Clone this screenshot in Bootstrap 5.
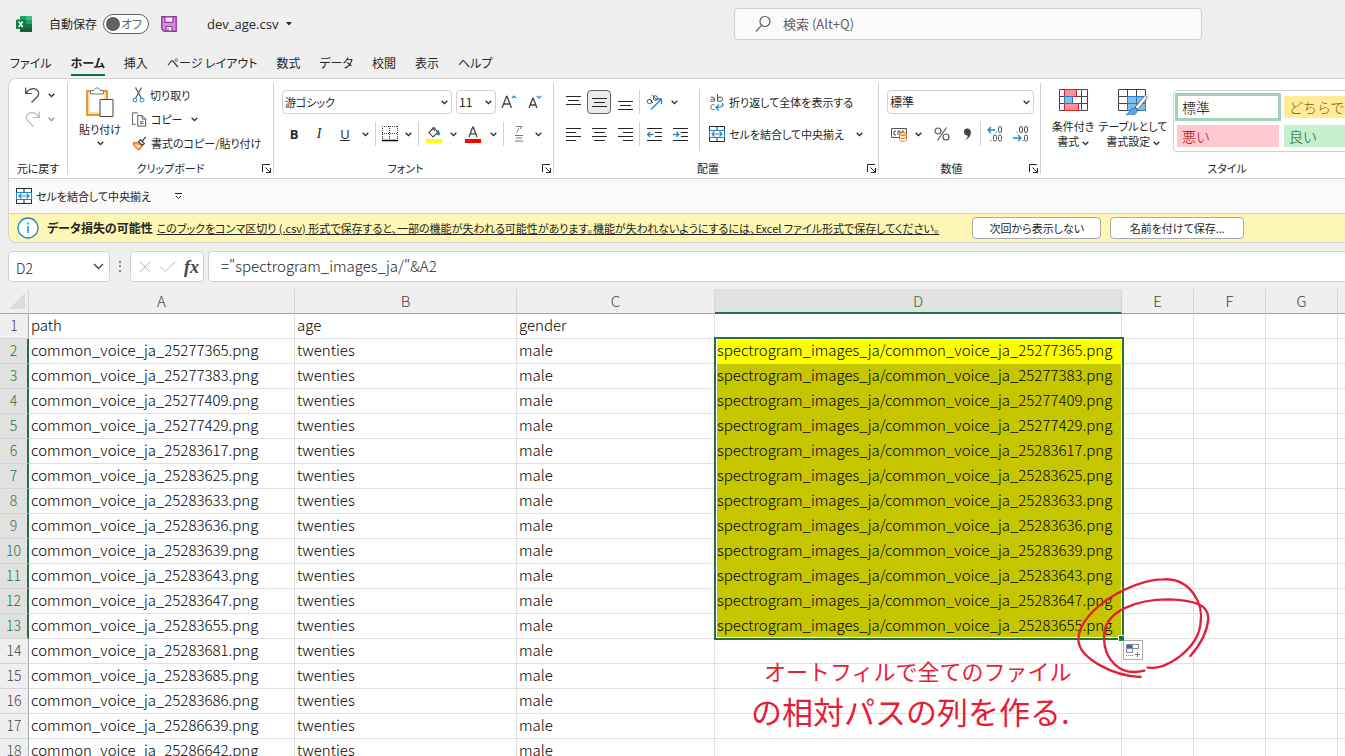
<!DOCTYPE html>
<html lang="ja">
<head>
<meta charset="utf-8">
<meta name="viewport" content="width=device-width, initial-scale=1">
<title>dev_age.csv - Excel</title>
<link rel="stylesheet" href="https://cdn.jsdelivr.net/npm/bootstrap@5.3.0/dist/css/bootstrap.min.css">
<style>
body{background:#efefef;color:#262626;font:11px/16px "Noto Sans CJK JP",sans-serif;font-feature-settings:"palt";overflow:hidden;height:100vh}
svg{display:block;fill:none;flex:none}
button{border:0;background:none;padding:0;color:inherit;font:inherit;font-feature-settings:inherit}
.ui{white-space:nowrap}
.titlebar{height:48px;padding:0 0 0 16px;font-size:12px}
.switch-box{width:46px;height:20px;border:1px solid #616161;border-radius:10px;background:#fff;padding:0 6px 0 2px;margin:0 12px 0 6px;color:#616161}
.switch-box input{appearance:none;width:14px;height:14px;border-radius:7px;background:#616161;margin:0}
.search{width:468px;height:32px;margin-right:143px;background:#fafafa;border:1px solid #d1d1d1;border-radius:4px;padding-left:20px}
.search input{border:0;background:none;outline:0;width:100%;font-size:13px}
.search input::placeholder{color:#616161;opacity:1}
.filename{font:13px/18px "Open Sans","Noto Sans",sans-serif;margin-left:30px}
.tabs{height:30px;padding:6px 0 0 10px;gap:19px;font-size:12px;line-height:18px}
.tabs a{color:#262626;text-decoration:none;height:22px;white-space:nowrap}
.tabs a.on{font-weight:700;border-bottom:2px solid #107040}
.ribbon{margin-left:8px;border:1px solid #d1d1d1;border-right:0;border-radius:8px 0 0 8px;overflow:hidden}
.groups{background:#fff;border-bottom:1px solid #d1d1d1;height:100px;padding:4px 0}
.grp{position:relative;flex:none;border-right:1px solid #d1d1d1;height:91px;display:flex;flex-direction:column}
.grp-body{height:76px;flex:none}
.grp-name{height:18px;line-height:18px;text-align:center;font-size:11px}
.launch{position:absolute;right:2px;bottom:1px}
.g-undo{width:59px}.g-clip{width:206px}.g-font{width:280px}.g-align{width:325px}.g-num{width:162px}.g-style{width:372px;border:0}
.line{display:flex;align-items:center;height:24px}
.two{padding-top:7px;display:flex;flex-direction:column;gap:8px}
.align-icons{padding-left:6px;width:145px}
.align-text{padding-left:9px}
.paste{width:64px}
.b14,.b22,.b24,.b26{display:flex;align-items:center;justify-content:center;height:24px;flex:none}
.b14{width:14px}.b22{width:22px}.b24{width:24px}.b26{width:26px}
.rule{width:1px;height:24px;background:#d1d1d1;margin:0 3px;flex:none}
.rule.tight{margin:0 1px}
.rule.tall{height:62px;margin:6px 0 0}
.pick{height:24px;border:1px solid #d1d1d1;border-radius:4px;background-color:#fff;padding:0 2px;font:12px/16px "Noto Sans CJK JP",sans-serif;font-feature-settings:"palt";color:#262626;appearance:none;
background-image:url("data:image/svg+xml,%3Csvg xmlns='http://www.w3.org/2000/svg' width='7' height='5' fill='none' stroke='%23262626' stroke-width='1.3'%3E%3Cpath d='M.7.8l2.8 2.8L6.300.8'/%3E%3C/svg%3E");background-repeat:no-repeat;background-position:right 3px center}
.w-font{width:170px;font-size:11px}.w-size{width:40px}.w-num{width:147px}
.toggled{background:#ebebeb;border:1px solid #616161;border-radius:4px;width:24px;margin:0 1px}
.glyph{font-family:"Open Sans",sans-serif;font-size:13px}
.glyph.fst-italic{font-family:"Liberation Serif",serif;font-size:14px}
.gallery{margin:7px 0 0 6px;height:62px;flex:1;min-width:0;border:1px solid #d1d1d1;border-right:0;border-radius:4px 0 0 4px;padding:1px;display:grid;grid-template-columns:106px 180px;grid-template-rows:29px 29px;column-gap:1px;font-size:14px;line-height:20px;align-items:center}
.gallery button{text-align:left;padding:0 5px;height:22px;margin:0 2px;font-feature-settings:normal;font-weight:300}
.gallery button.on{border:3px solid #9fd3b7;height:28px;margin:0;padding:0 4px;color:#000}
.bad{background:#ffc7ce;color:#9c0006}.good{background:#c6efce;color:#006100}.neutral{background:#ffeb9c;color:#9c5700}
.big{display:flex;flex-direction:column;align-items:center;line-height:15px;padding-top:6px;flex:none}
.big-cond{width:52px;margin-left:6px}
.big-table{width:68px}
.quick{height:34px;background:#fafafa;padding-left:7px}
.notice{height:29px;background:#fdf6b4;border-top:1px solid #d1d1d1;padding-left:8px;white-space:nowrap}
.notice strong{font-size:12px}
.notice a{color:#262626}
.notice button{background:#fff;border:1px solid #ababab;border-radius:4px;height:22px;text-align:center}
.hide-btn{width:129px;margin-left:29px}.save-btn{width:134px;margin-left:5px}
.fbar{height:46px;padding:8px 0 7px 8px}
.fbox{height:31px;background:#fff;border:1px solid #d1d1d1;border-radius:4px}
.fbar input{border:0;outline:0;font:300 15px/20px "Noto Sans CJK JP",sans-serif;color:#262626;width:100%;background:none;padding:0 0 2px}
.name-box{width:102px;padding:0 5px 0 7px}.name-box input{font-size:14px;padding:2px 0 0}
.dots{padding:0 9px}
.fx-box{width:74px}
.fx{font:italic 700 18px/22px "Liberation Serif",serif;color:#444}
.formula{padding-left:12px}
.sheet{position:relative;overflow:hidden}
.grid{table-layout:fixed;width:1409px;border-collapse:separate;border-spacing:0;background:#fff;font:15px/22px "Noto Sans CJK JP",sans-serif;font-feature-settings:normal;color:#000}
.grid td,.grid th{height:25px;padding:0 0 2px 2px;border:solid #e0e0e0;border-width:0 1px 1px 0;white-space:nowrap;font-weight:300}
.grid thead th{background:#efefef;color:#444;text-align:center;border-bottom-color:#a6a6a6;border-right-color:#d4d4d4;padding:0 0 1px}
.grid thead th.sel{background:#e1e1e1;color:#217346;border-bottom:2px solid #217346;padding:0}
.grid tbody th{background:#efefef;color:#444;text-align:center;padding:0 0 2px;border-right-color:#a6a6a6;border-bottom-color:#d4d4d4;font-size:14px}
.grid tbody th.sel{background:#e1e1e1;color:#217346;border-right:2px solid #217346}
.grid td.fill{background:#c6c600;border-color:#c6c600}
.grid td.first{background:#ff0;border-color:#ff0;position:relative}
.selbox{position:absolute;left:-1px;top:-2px;width:410px;height:303px;border:2px solid #217346;box-shadow:inset 0 0 0 1px #fff;pointer-events:none}
.handle{position:absolute;left:1118px;top:346px;width:7px;height:7px;background:#217346;border:1px solid #fff}
.fillopt{position:absolute;left:1123px;top:351px;width:20px;height:20px;background:#fff;border:1px solid #ababab}
.ink{position:absolute;left:720px;top:281px;overflow:visible}
.memo{position:absolute;left:751px;top:362px;color:#e81c36;line-height:38px;white-space:nowrap;font-feature-settings:normal}
.memo p{margin:0}.memo .m1{font-size:22px;padding-left:13px}.memo .m2{font-size:31px;line-height:44px}
</style>
</head>
<body>
<svg width="0" height="0" class="position-absolute" aria-hidden="true">
<symbol id="chev" viewBox="0 0 7 5"><path d="M.7.8l2.800 2.800L6.300.8" stroke="#262626" stroke-width="1.3"/></symbol>
<symbol id="corner" viewBox="0 0 9 9"><path d="M.5 8V.5H8M3.500 3.500l4.500 4.500M8.500 4v4.500H4" stroke="#262626"/></symbol>
<symbol id="merge" viewBox="0 0 16 16"><path d="M.5.5h15v15H.5zM8 .5v4M8 11.500v4" stroke="#262626"/><path d="M.5 4.500h15v7H.5z" fill="#fff" stroke="#1f87d2"/><path d="M3 8h10M5.500 5.500L3 8l2.500 2.500M10.500 5.500L13 8l-2.500 2.500" stroke="#1f87d2" stroke-width="1.2"/></symbol>
</svg>

<header class="titlebar d-flex align-items-center ui">
 <svg width="17" height="16" viewBox="0 0 17 16"><path d="M5 0h11v16H5a1 1 0 0 1-1-1V1a1 1 0 0 1 1-1z" fill="#21a366"/><path d="M10 0h6v4h-6z" fill="#33c481"/><path d="M4 4h6v4H4z" fill="#107c41"/><path d="M4 8h12v8H4z" fill="#185c37"/><path d="M10 8h6v4h-6z" fill="#107c41"/><rect y="3.500" width="9.500" height="9.500" rx="1" fill="#107c41"/><path d="M2.700 5.500l4 5.500M6.700 5.500l-4 5.500" stroke="#fff" stroke-width="1.500"/></svg>
 <label for="autosave" class="ms-3">自動保存</label>
 <span class="switch-box d-flex align-items-center justify-content-between"><input type="checkbox" id="autosave" role="switch"><span>オフ</span></span>
 <button aria-label="保存"><svg width="16" height="16" viewBox="0 0 16 16"><path d="M.8.800h14.400v14.400H3L.8 13z" fill="#d68fdc" stroke="#9b2fa0" stroke-width="1.400"/><path d="M4 .8h8v5.500H4zM5 15.200V10.500h6v4.700z" fill="#fff" stroke="#9b2fa0" stroke-width="1.200"/><path d="M7 12v3" stroke="#9b2fa0"/></svg></button>
 <button class="filename d-flex align-items-center gap-2">dev_age.csv<svg width="6" height="4" viewBox="0 0 6 4"><path d="M0 0h6L3 3.500z" fill="#262626"/></svg></button>
 <div class="search ms-auto d-flex align-items-center gap-2">
  <svg width="18" height="18" viewBox="0 0 18 18" stroke="#616161" stroke-width="1.200"><circle cx="10" cy="6.500" r="5"/><path d="M6.500 10.300L1 16.500"/></svg>
  <input type="search" aria-label="検索" placeholder="検索 (Alt+Q)">
 </div>
</header>

<nav class="tabs d-flex">
 <a href="#">ファイル</a><a href="#" class="on">ホーム</a><a href="#">挿入</a><a href="#">ページ レイアウト</a><a href="#">数式</a><a href="#">データ</a><a href="#">校閲</a><a href="#">表示</a><a href="#">ヘルプ</a>
</nav>

<main>
<section class="ribbon">
 <div class="groups d-flex ui">
  <div class="grp g-undo">
   <div class="grp-body ps-3">
    <div class="line"><button class="d-flex align-items-center gap-2" aria-label="元に戻す"><svg width="15" height="17" viewBox="0 0 15 17" stroke="#444" stroke-width="1.200"><path d="M.7.500v6h6M1 6.200C4 2 8 .8 11.500 2.500c3 2 3 5.500 0 8L6.500 15.500"/></svg><svg width="7" height="5"><use href="#chev"/></svg></button></div>
    <div class="line opacity-50"><button class="d-flex align-items-center gap-2" aria-label="やり直し"><svg width="15" height="17" viewBox="0 0 15 17" stroke="#777" stroke-width="1.200"><path d="M14.300.500v6h-6M14 6.200C11 2 7 .8 3.500 2.500c-3 2-3 5.500 0 8L8.500 15.500"/></svg><svg width="7" height="5"><use href="#chev"/></svg></button></div>
   </div><div class="grp-name">元に戻す</div>
  </div>
  <div class="grp g-clip">
   <div class="grp-body d-flex">
    <button class="paste d-flex flex-column align-items-center pt-1"><svg width="28" height="30" viewBox="0 0 28 30"><path d="M1 4h20v24H1z" fill="#fbe0a0" stroke="#e07a10" stroke-width="1.500"/><path d="M4 7h14v18H4z" fill="#fff"/><path d="M4.500 7V3.500H8C8.500 0 13.500 0 14 3.500h3.500V7z" fill="#fff" stroke="#777"/><path d="M14 12.500h13v17H14z" fill="#fff" stroke="#444"/></svg><span class="mt-1">貼り付け</span><svg class="mt-1" width="7" height="5"><use href="#chev"/></svg></button>
    <div>
     <button class="line gap-1"><svg width="14" height="16" viewBox="0 0 14 16"><path d="M3.500.500l6 11M9.500.500l-6 11" stroke="#555" stroke-width="1.200"/><circle cx="3" cy="13" r="2" stroke="#1f87d2"/><circle cx="10" cy="13" r="2" stroke="#1f87d2"/></svg>切り取り</button>
     <button class="line gap-1"><svg width="15" height="15" viewBox="0 0 17 16" stroke="#444"><path d="M4 13.500H.5v-13H6l1 1"/><path d="M6.500 3.500h5l4 4v8h-9z" fill="#fff"/><path d="M11.500 3.500v4h4M9 10.500h4M9 12.500h4"/></svg>コピー<svg class="ms-1" width="7" height="5"><use href="#chev"/></svg></button>
     <button class="line gap-1"><svg width="15" height="16" viewBox="0 0 16 16"><path d="M1 8l6-1 4 4-3 4.500C5 14.500 2 12 1 8z" fill="#f3a04e" stroke="#d9660a"/><path d="M3 10l5 1M5 13l4-2" stroke="#fff"/><path d="M7 6.500l2-2 4 4-2 2zM11 6l3.500-4.500" stroke="#444" fill="#fff" stroke-width="1.400"/></svg>書式のコピー/貼り付け</button>
    </div>
   </div><div class="grp-name">クリップボード</div><svg class="launch" width="9" height="9"><use href="#corner"/></svg>
  </div>
  <div class="grp g-font">
   <div class="grp-body two ps-2">
    <div class="line"><select class="pick w-font" aria-label="フォント"><option>游ゴシック</option></select><select class="pick w-size ms-1" aria-label="サイズ"><option>11</option></select>
     <button class="b26" aria-label="拡大"><svg width="16" height="16" viewBox="0 0 16 16"><path d="M1 14L5.500 2.500h.6L10.500 14M2.600 10h6.400" stroke="#444" stroke-width="1.300"/><path d="M11 4l2-2 2 2" stroke="#1f87d2" stroke-width="1.200"/></svg></button>
     <button class="b26" aria-label="縮小"><svg width="14" height="16" viewBox="0 0 14 16"><path d="M1 14L4.700 4.500h.6L9 14M2.300 11h5.400" stroke="#444" stroke-width="1.300"/><path d="M9 2l2 2 2-2" stroke="#1f87d2" stroke-width="1.200"/></svg></button></div>
    <div class="line">
     <button class="b24 glyph fw-bold">B</button><button class="b26 glyph fst-italic">I</button><button class="b26 glyph text-decoration-underline">U</button><button class="b14" aria-label="下線"><svg width="7" height="5"><use href="#chev"/></svg></button><i class="rule"></i>
     <button class="b22" aria-label="罫線"><svg width="16" height="16" viewBox="0 0 16 16"><path d="M0 .5h16M0 7.500h16M.5 0v14M7.500 0v14M15.500 0v14" stroke="#444" stroke-dasharray="1 1"/><path d="M0 14.500h16" stroke="#000" stroke-width="1.500"/></svg></button><button class="b14" aria-label="罫線の種類"><svg width="7" height="5"><use href="#chev"/></svg></button><i class="rule"></i>
     <button class="b24" aria-label="塗りつぶし"><svg width="16" height="17" viewBox="0 0 16 17"><path d="M3 6.500l5-5 4 5-5 4.500zM6 1.500L9 5" stroke="#444" stroke-width="1.100"/><path d="M11.500 4.500l1.500 4.500" stroke="#1f6fb5" stroke-width="2.500"/><path d="M0 13h16v4H0z" fill="#ff0"/></svg></button><button class="b14" aria-label="塗りつぶしの色"><svg width="7" height="5"><use href="#chev"/></svg></button>
     <button class="b26" aria-label="フォントの色"><svg width="16" height="17" viewBox="0 0 16 17"><path d="M4 11L7.700 1.200h.6L12 11M5.200 7.800h5.600" stroke="#444" stroke-width="1.300"/><path d="M0 13h16v4H0z" fill="#f00"/></svg></button><button class="b14" aria-label="文字色"><svg width="7" height="5"><use href="#chev"/></svg></button><i class="rule"></i>
     <button class="b24" aria-label="ふりがな"><svg width="10" height="16" viewBox="0 0 10 16" stroke="#777"><path d="M2 .5h6L6 3M4.500 2.500c0 2-1 3-2 4M1 9.500h8M2 12h6M1 15h8"/></svg></button><button class="b14" aria-label="ふりがな設定"><svg width="7" height="5"><use href="#chev"/></svg></button>
    </div>
   </div><div class="grp-name pe-3">フォント</div><svg class="launch" width="9" height="9"><use href="#corner"/></svg>
  </div>
  <div class="grp g-align">
   <div class="grp-body d-flex">
    <div class="two align-icons">
     <div class="line">
      <button class="b26" aria-label="上揃え"><svg width="15" height="15" viewBox="0 0 15 15" stroke="#262626"><path d="M0 1.500h15M2 5.500h11M0 9.500h15"/></svg></button><button class="b26 toggled" aria-label="上下中央"><svg width="15" height="15" viewBox="0 0 15 15" stroke="#262626"><path d="M0 3.500h15M2 7.500h11M0 11.500h15"/></svg></button><button class="b26" aria-label="下揃え"><svg width="15" height="15" viewBox="0 0 15 15" stroke="#262626"><path d="M0 6.500h15M2 10.500h11M0 14.500h15"/></svg></button><i class="rule tight"></i>
      <button class="b26" aria-label="方向"><svg width="17" height="17" viewBox="0 0 17 17"><g stroke="#555"><ellipse cx="3.500" cy="7.500" rx="2.500" ry="2"/><path d="M3 5l4 4M6 .5l5 6"/><ellipse cx="9.300" cy="4" rx="2" ry="2.300"/></g><path d="M5 15.500L15.500 5M10.500 5h5v5" stroke="#1f87d2" stroke-width="1.300"/></svg></button><button class="b14" aria-label="方向の種類"><svg width="7" height="5"><use href="#chev"/></svg></button>
     </div>
     <div class="line">
      <button class="b26" aria-label="左揃え"><svg width="15" height="15" viewBox="0 0 15 15" stroke="#262626"><path d="M0 1.500h15M0 5.500h10M0 9.500h15M0 13.500h10"/></svg></button><button class="b26" aria-label="中央揃え"><svg width="15" height="15" viewBox="0 0 15 15" stroke="#262626"><path d="M0 1.500h15M2 5.500h11M0 9.500h15M2 13.500h11"/></svg></button><button class="b26" aria-label="右揃え"><svg width="15" height="15" viewBox="0 0 15 15" stroke="#262626"><path d="M0 1.500h15M5 5.500h10M0 9.500h15M5 13.500h10"/></svg></button><i class="rule tight"></i>
      <button class="b26" aria-label="インデント減"><svg width="15" height="15" viewBox="0 0 15 15" stroke="#262626"><path d="M0 1.500h15M8 5.500h7M8 9.500h7M0 13.500h15"/><path d="M6.500 7.500H1M3 5L.7 7.500 3 10" stroke="#1f87d2" stroke-width="1.300"/></svg></button><button class="b26" aria-label="インデント増"><svg width="15" height="15" viewBox="0 0 15 15" stroke="#262626"><path d="M0 1.500h15M8 5.500h7M8 9.500h7M0 13.500h15"/><path d="M0 7.500h5.500M3.500 5l2.300 2.500L3.500 10" stroke="#1f87d2" stroke-width="1.300"/></svg></button>
     </div>
    </div>
    <i class="rule tall"></i>
    <div class="two align-text">
     <button class="line gap-1"><svg width="16" height="17" viewBox="0 0 16 17"><g stroke="#555"><path d="M1.500 3.500c4-1 4 0 4 4M5.500 5c-5 0-5 3-2 2.500l2-1M8.500 0v7.500"/><ellipse cx="11" cy="5.200" rx="2.500" ry="2.300"/><path d="M5.500 11c-5-2-5 6 0 4.500"/></g><path d="M13.500 9c1.500 4-2 4.500-6 4.500M10 10.500l-3 3 3 3" stroke="#1f87d2" stroke-width="1.400"/></svg>折り返して全体を表示する</button>
     <button class="line gap-1"><svg width="16" height="16"><use href="#merge"/></svg>セルを結合して中央揃え<svg class="ms-2" width="7" height="5"><use href="#chev"/></svg></button>
    </div>
   </div><div class="grp-name pe-3">配置</div><svg class="launch" width="9" height="9"><use href="#corner"/></svg>
  </div>
  <div class="grp g-num">
   <div class="grp-body two ps-2">
    <div class="line"><select class="pick w-num" aria-label="表示形式"><option>標準</option></select></div>
    <div class="line">
     <button class="b24" aria-label="通貨"><svg width="17" height="15" viewBox="0 0 17 15"><path d="M.5 1.500h15v9H.5zM5 4H3v4h2M7 8V4h2v4M13 4h-2v3" stroke="#555"/><path d="M8.500 7v5.500c0 2.500 7 2.500 7 0V7z" fill="#fff" stroke="#e07a10"/><ellipse cx="12" cy="7" rx="3.500" ry="1.500" fill="#fbe0a0" stroke="#e07a10"/><path d="M8.500 10c1 2 6 2 7 0" stroke="#e07a10"/></svg></button><button class="b14" aria-label="通貨の種類"><svg width="7" height="5"><use href="#chev"/></svg></button>
     <button class="b26 ms-1" aria-label="パーセント"><svg width="16" height="14" viewBox="0 0 16 14" stroke="#555" stroke-width="1.200"><circle cx="4" cy="4" r="3"/><circle cx="12" cy="10" r="3"/><path d="M12.500.500l-9 13"/></svg></button><button class="b24" aria-label="桁区切り"><svg width="9" height="13" viewBox="0 0 9 13"><path d="M1 4a3 3 0 0 1 3.500-3.500C9 .5 10 8.500 2 12.500c2-2 3-3.500 2.500-5C2.500 7.500 1 6 1 4z" fill="#444"/></svg></button><i class="rule tight"></i>
     <button class="b26" aria-label="小数点増"><svg width="16" height="16" viewBox="0 0 16 16"><g stroke="#555"><rect x="11.500" y=".5" width="3" height="6" rx="1.500"/><rect x="6.500" y="9" width="3" height="6" rx="1.500"/><rect x="11.500" y="9" width="3" height="6" rx="1.500"/><path d="M3.500 14.500h1M9 6h1"/></g><path d="M8 4H1M4 1L1 4l3 3" stroke="#1f87d2" stroke-width="1.300"/></svg></button><button class="b26" aria-label="小数点減"><svg width="16" height="16" viewBox="0 0 16 16"><g stroke="#555"><rect x="6.500" y=".5" width="3" height="6" rx="1.500"/><rect x="11.500" y=".5" width="3" height="6" rx="1.500"/><rect x="11.500" y="9" width="3" height="6" rx="1.500"/><path d="M3.500 6h1M9.500 14.500h1"/></g><path d="M0 12h7M5 9l3 3-3 3" stroke="#1f87d2" stroke-width="1.300"/></svg></button>
    </div>
   </div><div class="grp-name pe-3">数値</div><svg class="launch" width="9" height="9"><use href="#corner"/></svg>
  </div>
  <div class="grp g-style">
   <div class="grp-body d-flex">
    <button class="big big-cond"><svg width="29" height="22" viewBox="0 0 29 22"><path d="M.5.500h28v21H.5zM.5 7.500h28M.5 14.500h28M5.500.500v21M22.500.500v21" stroke="#444" fill="#fff"/><path d="M5.500.500h12v7h-12zM5.500 14.500h14v7h-14z" fill="#ff8f98" stroke="#d22"/><path d="M5.500 7.500h8v7h-8z" fill="#83beec" stroke="#2a7ac0"/></svg><span class="mt-2">条件付き</span><span>書式 <svg class="d-inline-block" width="7" height="5"><use href="#chev"/></svg></span></button>
    <button class="big big-table"><svg width="30" height="26" viewBox="0 0 30 26"><path d="M.5.500h27v21H.5zM.5 7.500h27M.5 14.500h27M9.500.500v21M18.500.500v21" stroke="#444" fill="#fff"/><path d="M9.500 7.500h18v14h-18z" fill="#83beec"/><path d="M9.500 14.500h18M18.500 7.500v14M9.500 7.500h18v14h-18z" stroke="#2a7ac0"/><path d="M17 18L27 6.500l2.500 2L20 20.500z" fill="#fff" stroke="#666"/><path d="M8 25.500c4-1 3-6 8-6.500 3 0 4 3 2 5-2 2.500-6 3-10 1.500z" fill="#5ba6e0" stroke="#2a7ac0"/></svg><span class="mt-1">テーブルとして</span><span>書式設定 <svg class="d-inline-block" width="7" height="5"><use href="#chev"/></svg></span></button>
    <div class="gallery"><button class="on">標準</button><button class="neutral">どちらでもない</button><button class="bad">悪い</button><button class="good">良い</button></div>
   </div><div class="grp-name">スタイル</div>
  </div>
 </div>
 <div class="quick d-flex align-items-center ui">
  <button class="d-flex align-items-center gap-1"><svg width="16" height="16"><use href="#merge"/></svg>セルを結合して中央揃え</button>
  <button class="ms-4" aria-label="カスタマイズ"><svg width="7" height="7" viewBox="0 0 7 7" stroke="#262626"><path d="M0 .5h7M1 3l2.500 2.500L6 3"/></svg></button>
 </div>
 <div class="notice d-flex align-items-center gap-1">
  <svg width="22" height="22" viewBox="0 0 22 22"><circle cx="11" cy="11" r="10" fill="#fff" stroke="#1f87d2" stroke-width="1.300"/><path d="M11 9v7M11 5.500v2" stroke="#1f87d2" stroke-width="1.500"/></svg>
  <strong class="ms-1">データ損失の可能性</strong>
  <a href="#">このブックをコンマ区切り (.csv) 形式で保存すると、一部の機能が失われる可能性があります。機能が失われないようにするには、Excel ファイル形式で保存してください。</a>
  <button class="hide-btn">次回から表示しない</button><button class="save-btn">名前を付けて保存...</button>
 </div>
</section>

<section class="fbar d-flex">
 <label class="fbox name-box d-flex align-items-center"><input type="text" value="D2" aria-label="名前ボックス"><svg width="11" height="7" viewBox="0 0 11 7"><path d="M1 1l4.500 4.500L10 1" stroke="#444" stroke-width="1.300"/></svg></label>
 <span class="dots align-self-center"><svg width="2" height="11" viewBox="0 0 2 11"><path d="M0 0h2v2H0zM0 4h2v2H0zM0 9h2v2H0z" fill="#888"/></svg></span>
 <div class="fbox fx-box d-flex align-items-center justify-content-between px-1">
  <button class="ms-1" aria-label="キャンセル"><svg width="12" height="12" viewBox="0 0 12 12"><path d="M.5.500l11 11M11.500.500l-11 11" stroke="#bbb"/></svg></button><button aria-label="入力"><svg width="16" height="11" viewBox="0 0 16 11"><path d="M.5 6l4.500 4.500L15.500.500" stroke="#bbb"/></svg></button><button class="fx" aria-label="関数の挿入">fx</button>
 </div>
 <label class="fbox formula flex-grow-1 ms-1 d-flex align-items-center rounded-end-0 border-end-0"><input type="text" aria-label="数式バー" value='="spectrogram_images_ja/"&amp;A2'></label>
</section>

<section class="sheet">
 <table class="grid">
  <colgroup><col style="width:29px"><col style="width:266px"><col style="width:222px"><col style="width:198px"><col style="width:407px"><col style="width:72px"><col style="width:72px"><col style="width:72px"><col style="width:71px"></colgroup>
  <thead><tr><th><svg class="ms-2" width="18" height="18" viewBox="0 0 18 18"><path d="M17 1v16H1z" fill="#dcdcdc"/></svg></th><th>A</th><th>B</th><th>C</th><th class="sel">D</th><th>E</th><th>F</th><th>G</th><th></th></tr></thead>
  <tbody id="rows"></tbody>
 </table>
 <svg class="ink" width="500" height="186" viewBox="0 0 1500 558" stroke="#e2203a" stroke-width="7" stroke-linecap="round"><path d="M1262 321C1180 318 1075 265 1075 207C1080 115 1240 28 1330 28C1415 24 1450 105 1442 155C1438 235 1335 305 1283 292"/><path d="M1273 302C1195 322 1152 262 1152 203C1150 118 1260 88 1345 88C1425 90 1465 105 1465 145C1462 190 1440 225 1411 258"/></svg>
 <span class="handle"></span>
 <button class="fillopt" aria-label="オートフィル オプション"><svg width="18" height="18" viewBox="0 0 18 18"><path d="M2.500 3.500h12v4h-12zM2.500 7.500h6v4h-6zM8.500 3.500v4" stroke="#888"/><path d="M3 4h5v3H3z" fill="#2b6be8"/><path d="M2 14.500h8" stroke="#888" stroke-dasharray="1 1"/><path d="M13.500 11v5M11 13.500h5" stroke="#777"/></svg></button>
 <div class="memo"><p class="m1">オートフィルで全てのファイル</p><p class="m2">の相対パスの列を作る.</p></div>
</section>
</main>
<script>
const ids = [25277365,25277383,25277409,25277429,25283617,25283625,25283633,25283636,25283639,25283643,25283647,25283655,25283681,25283685,25283686,25286639,25286642];
const blank = '<td></td>'.repeat(4);
let html = '<tr><th>1</th><td>path</td><td>age</td><td>gender</td><td></td>' + blank + '</tr>';
ids.forEach((id, i) => {
  const file = `common_voice_ja_${id}.png`;
  const sel = i < 12;
  const d = !sel ? '<td></td>' : `<td class="${i ? 'fill' : 'first'}">spectrogram_images_ja/${file}${i ? '' : '<span class="selbox"></span>'}</td>`;
  html += `<tr><th${sel ? ' class="sel"' : ''}>${i + 2}</th><td>${file}</td><td>twenties</td><td>male</td>${d}${blank}</tr>`;
});
document.getElementById('rows').innerHTML = html;
</script>
<script src="https://cdn.jsdelivr.net/npm/bootstrap@5.3.0/dist/js/bootstrap.bundle.min.js"></script>
</body>
</html>
